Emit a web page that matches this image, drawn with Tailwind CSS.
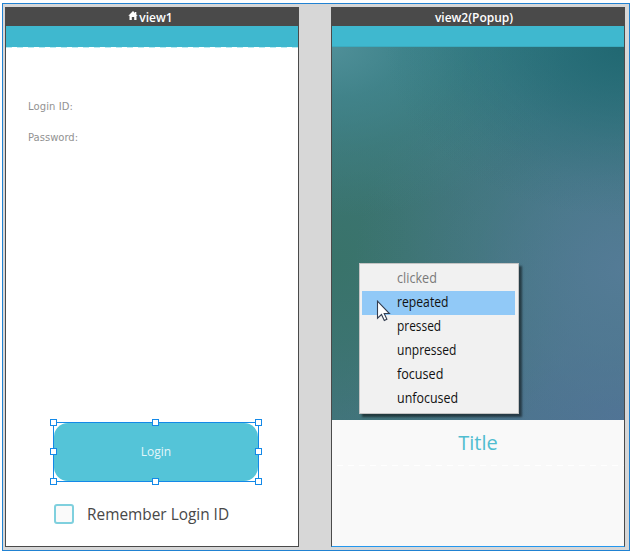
<!DOCTYPE html>
<html lang="en">
<head>
<meta charset="utf-8">
<title>Views</title>
<script src="https://cdn.jsdelivr.net/npm/@tailwindcss/browser@4"></script>
</head>
<body class="w-[635px] h-[555px] overflow-hidden bg-white pl-[2px] pt-[3px] font-['Open_Sans',sans-serif]">
<main class="flex w-[628px] h-[548px] border border-[#2182d2] bg-[#d7d7d7] pl-[2px] pt-[3px] gap-8">
  <section class="flex flex-col w-[294px] h-[540px] border border-[#4a4a4a] bg-white shrink-0">
    <header class="flex h-[18px] bg-[#4a4a4a] text-white text-[12px] font-semibold leading-[18px] justify-center items-start shrink-0">
      <svg class="w-[10px] h-[9px] mt-[3px] -ml-[3px] mr-[1px]" viewBox="0 0 10 9" fill="white"><path d="M5 0 .3 4.8h1.2V9h2.3V6h2.4v3h2.3V4.8h1.2L8.3 3.4V1H7v1.1z"/></svg>
      <span class="inline-block pt-px">view1</span>
    </header>
    <div class="h-[21px] bg-[#3fb8cf] shrink-0"></div>
    <div class="h-px bg-[repeating-linear-gradient(90deg,#b9eaf2_0_6px,#ffffff_6px_11px)] shrink-0"></div>
    <div class="flex flex-col pl-[22px] pt-[51px] gap-[16px] font-['DejaVu_Sans',sans-serif] text-[10px] leading-[15px] text-[#929292] h-[374px] shrink-0">
      <span class="tracking-[.1px]">Login ID:</span>
      <span>Password:</span>
    </div>
    <div class="relative ml-[47px] w-[206px] h-[60px] border border-[#1389e8] shrink-0">
      <div class="flex h-full w-full items-center justify-center rounded-[14px] bg-[#54c4d8] text-[#e3f6fa] text-[12px]"><span>Login</span></div>
      <i class="absolute size-[7px] border border-[#1389e8] bg-white -left-[4px] -top-[4px]"></i>
      <i class="absolute size-[7px] border border-[#1389e8] bg-white left-[98px] -top-[4px]"></i>
      <i class="absolute size-[7px] border border-[#1389e8] bg-white -right-[4px] -top-[4px]"></i>
      <i class="absolute size-[7px] border border-[#1389e8] bg-white -left-[4px] top-[25px]"></i>
      <i class="absolute size-[7px] border border-[#1389e8] bg-white -right-[4px] top-[25px]"></i>
      <i class="absolute size-[7px] border border-[#1389e8] bg-white -left-[4px] -bottom-[4px]"></i>
      <i class="absolute size-[7px] border border-[#1389e8] bg-white left-[98px] -bottom-[4px]"></i>
      <i class="absolute size-[7px] border border-[#1389e8] bg-white -right-[4px] -bottom-[4px]"></i>
    </div>
    <div class="flex items-center pl-[48px] pt-[22px] gap-[13px]">
      <span class="size-[20px] rounded-[3px] border-2 border-[#7fd0de] bg-[#fafafa]"></span>
      <span class="inline-block origin-left scale-x-[.962] text-[16px] leading-[20px] text-[#484848] whitespace-nowrap">Remember Login ID</span>
    </div>
  </section>
  <section class="relative flex flex-col w-[294px] h-[540px] border border-[#4a4a4a] border-b-[#2497ee] bg-[#f9f9f9] shrink-0">
    <header class="h-[18px] bg-[#4a4a4a] text-white text-[12px] font-semibold leading-[18px] text-center shrink-0"><span class="inline-block pt-px pr-[8px]">view2(Popup)</span></header>
    <div class="h-[21px] bg-[#3fb8cf] border-b border-[#3babc0] shrink-0"></div>
    <div class="h-[373px] shrink-0 bg-[radial-gradient(ellipse_240px_170px_at_100%_0%,#216872_0%,#216872b0_25%,#21687250_55%,#21687218_80%,#21687200_100%),radial-gradient(ellipse_240px_170px_at_0%_0%,#4f8f98_0%,#458890b0_30%,#42848960_60%,#42848900_100%),radial-gradient(ellipse_270px_260px_at_100%_60%,#547b96_0%,#547b96b0_25%,#547b9650_55%,#547b9618_85%,#547b9600_100%),radial-gradient(ellipse_250px_250px_at_0%_58%,#39736a_0%,#39736ac0_30%,#39736a60_60%,#39736a00_100%),radial-gradient(ellipse_290px_190px_at_100%_100%,#4f7195_0%,#4f7195a0_30%,#4f719540_65%,#4f719500_100%),linear-gradient(180deg,#337b84_0%,#3e7780_30%,#467583_100%)]"></div>
    <div class="flex justify-center h-[45px] pt-[9px] text-[20px] leading-[28px] text-[#50bdd0] shrink-0"><span>Title</span></div>
    <div class="h-px shrink-0 bg-[repeating-linear-gradient(90deg,#f9f9f9_0_5px,#ffffff_5px_11px)]"></div>
    <ul class="absolute left-[27px] top-[255px] w-[160px] h-[151px] border border-[#c4c4c4] bg-[#f1f1f1] pl-[2px] pr-[3px] pt-[3px] shadow-[3px_3px_2px_rgba(0,0,0,0.5)] text-[14px] leading-[22px] text-[#111]">
      <li class="h-[24px] pl-[35px] text-[#797979]"><span class="inline-block origin-left scale-x-[.9]">clicked</span></li>
      <li class="h-[24px] pl-[35px] bg-[#91c9f7]"><span class="inline-block origin-left scale-x-[.87]">repeated</span></li>
      <li class="h-[24px] pl-[35px]"><span class="inline-block origin-left scale-x-[.85]">pressed</span></li>
      <li class="h-[24px] pl-[35px]"><span class="inline-block origin-left scale-x-[.86]">unpressed</span></li>
      <li class="h-[24px] pl-[35px]"><span class="inline-block origin-left scale-x-[.9]">focused</span></li>
      <li class="h-[24px] pl-[35px]"><span class="inline-block origin-left scale-x-[.89]">unfocused</span></li>
    </ul>
    <svg class="absolute left-[44px] top-[292px] w-[15px] h-[22px]" viewBox="0 0 15 22"><path d="M1.5 1.2v17l4-3.7 2.8 6 2.6-1.2-2.7-5.8h5.2z" fill="white" stroke="#333d50" stroke-width="1.1"/></svg>
  </section>
</main>
</body>
</html>
